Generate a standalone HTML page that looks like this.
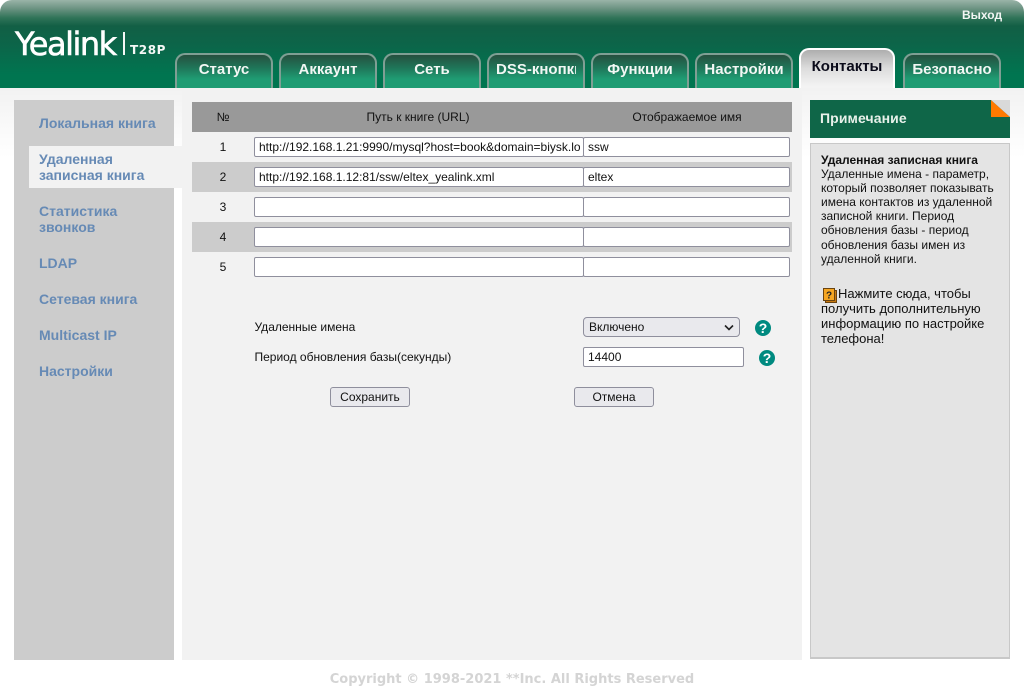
<!DOCTYPE html>
<html><head><meta charset="utf-8"><style>
*{box-sizing:border-box}
html,body{margin:0;padding:0}
body{width:1024px;height:697px;position:relative;overflow:hidden;background:#fff;font-family:"Liberation Sans",sans-serif;font-size:12px;color:#111}
.a{position:absolute}
#hd{left:0;top:0;width:1024px;height:88px;border-radius:12px 12px 0 0;background:linear-gradient(#9ab4a8 0,#6f9585 8px,#2f7358 18px,#125f45 26px,#0c6549 45px,#007550 75px,#007550 88px)}
#bg{left:0;top:88px;width:1024px;height:70px;background:linear-gradient(#f2f2f2,#fff)}
.tab{position:absolute;top:53px;width:98px;height:35px;border:2px solid #7f9f94;border-bottom:0;border-radius:10px 10px 0 0;background:linear-gradient(#26503f 0,#1f7659 13px,#1f9c73 24px,#1f9c73 100%);color:#f2f7f4;font:bold 15px/30px "Liberation Sans",sans-serif;text-align:center;overflow:hidden;white-space:nowrap}
.tab.on{top:48px;width:96px;height:40px;border:2px solid #fff;border-bottom:0;background:linear-gradient(#aeaeae 0,#dcdcdc 18px,#f3f3f3 36px);color:#0b0b1a;line-height:33px}
#side{left:14px;top:100px;width:160px;height:560px;background:#ccc}
#main{left:182px;top:88px;width:620px;height:572px;background:#f2f2f2}
.m{position:absolute;left:39px;font:bold 14px/16px "Liberation Sans",sans-serif;color:#668ab5}
#act{left:29px;top:146px;width:153px;height:42px;background:#f2f2f2}
.row{position:absolute;left:192px;width:600px;height:30px}
.n{position:absolute;left:192px;width:62px;text-align:center;line-height:30px;height:30px}
.i{position:absolute;height:20px;background:#fff;border:1px solid #8f8f9d;border-radius:2px;padding:0 3px 0 4px;line-height:18px;overflow:hidden;white-space:nowrap;color:#111}
.i .c{display:block;overflow:hidden}
.b{position:absolute;top:387px;width:80px;height:20px;background:#e9e9ed;border:1px solid #8f8f9d;border-radius:3px;text-align:center;line-height:18px}
.h{position:absolute;width:16px;height:16px;border-radius:50%;background:#008a80;color:#fff;font:bold 14px/16px "Liberation Sans",sans-serif;text-align:center}
</style></head><body>
<div class="a" id="bg"></div>
<div class="a" id="hd"></div>
<div class="a" style="left:15px;top:25px;font:32px/38px 'DejaVu Sans',sans-serif;color:#fff;letter-spacing:-1.5px;-webkit-text-stroke:.6px #fff;white-space:nowrap">Yealink</div>
<div class="a" style="left:123px;top:32px;width:2px;height:23px;background:#f4f8f6"></div>
<div class="a" style="left:130px;top:43px;font:bold 12px/15px 'DejaVu Sans',sans-serif;color:#f4f8f6;letter-spacing:.6px;white-space:nowrap">T28P</div>
<div class="a" style="left:962px;top:8px;font:bold 12px/14px 'Liberation Sans',sans-serif;color:#f2f5f3">Выход</div>
<div class="tab" style="left:175px">Статус</div>
<div class="tab" style="left:279px">Аккаунт</div>
<div class="tab" style="left:383px">Сеть</div>
<div class="tab" style="left:487px;padding-left:7px;text-align:left"><div style="width:80px;overflow:hidden">DSS-кнопки</div></div>
<div class="tab" style="left:591px">Функции</div>
<div class="tab" style="left:695px">Настройки</div>
<div class="tab on" style="left:799px">Контакты</div>
<div class="tab" style="left:903px">Безопасно</div>

<div class="a" id="side"></div>
<div class="a" id="main"></div>
<div class="a" id="act"></div>
<div class="m" style="top:115px">Локальная книга</div>
<div class="m" style="top:151px">Удаленная<br>записная книга</div>
<div class="m" style="top:203px">Статистика<br>звонков</div>
<div class="m" style="top:255px">LDAP</div>
<div class="m" style="top:291px">Сетевая книга</div>
<div class="m" style="top:327px">Multicast IP</div>
<div class="m" style="top:363px">Настройки</div>

<div class="row" style="top:102px;background:#999"></div>
<div class="n" style="top:102px;left:192px">№</div>
<div class="a" style="left:254px;width:328px;top:102px;line-height:30px;text-align:center">Путь к книге (URL)</div>
<div class="a" style="left:584px;width:206px;top:102px;line-height:30px;text-align:center">Отображаемое имя</div>
<div class="row" style="top:162px;background:#ccc"></div>
<div class="row" style="top:222px;background:#ccc"></div>
<div class="n" style="top:132px">1</div>
<div class="n" style="top:162px">2</div>
<div class="n" style="top:192px">3</div>
<div class="n" style="top:222px">4</div>
<div class="n" style="top:252px">5</div>
<div class="i" style="left:254px;top:137px;width:330px"><span class="c">http://192.168.1.21:9990/mysql?host=book&amp;domain=biysk.local</span></div>
<div class="i" style="left:583px;top:137px;width:207px">ssw</div>
<div class="i" style="left:254px;top:167px;width:330px">http://192.168.1.12:81/ssw/eltex_yealink.xml</div>
<div class="i" style="left:583px;top:167px;width:207px">eltex</div>
<div class="i" style="left:254px;top:197px;width:330px"></div>
<div class="i" style="left:583px;top:197px;width:207px"></div>
<div class="i" style="left:254px;top:227px;width:330px"></div>
<div class="i" style="left:583px;top:227px;width:207px"></div>
<div class="i" style="left:254px;top:257px;width:330px"></div>
<div class="i" style="left:583px;top:257px;width:207px"></div>

<div class="a" style="left:254.5px;top:320px;line-height:14px">Удаленные имена</div>
<div class="a" style="left:254.5px;top:350px;line-height:14px">Период обновления базы(секунды)</div>
<div class="i" style="left:583px;top:317px;width:157px;background:#e9e9ed;border-radius:4px;padding-left:5px">Включено
<svg class="a" style="left:140px;top:6px" width="10" height="7" viewBox="0 0 10 7"><path d="M1 1.5 5 5.5 9 1.5" fill="none" stroke="#222" stroke-width="1.6"/></svg></div>
<div class="i" style="left:583px;top:347px;width:161px">14400</div>
<div class="h" style="left:755px;top:320px">?</div>
<div class="h" style="left:759px;top:350px">?</div>
<div class="b" style="left:330px">Сохранить</div>
<div class="b" style="left:574px">Отмена</div>

<div class="a" style="left:810px;top:100px;width:200px;height:38px;background:#0f6648;color:#e8f1ea;font:bold 14px/36px 'Liberation Sans',sans-serif;padding-left:10px;letter-spacing:.1px">Примечание</div>
<svg class="a" style="left:991px;top:100px" width="19" height="17" viewBox="0 0 19 17"><path d="M0 0 19 17H0Z" fill="#ff7a00"/><path d="M0 0H19V17Z" fill="#d9d9d9"/></svg>
<div class="a" style="left:810px;top:143px;width:200px;height:516px;background:#e4e4e4;border:1px solid #c8c8c8;border-width:1px 1px 2px 1px"></div>
<div class="a" style="left:821px;top:153px;width:180px;line-height:14.1px;color:#111"><b>Удаленная записная книга</b><br>Удаленные имена - параметр,<br>который позволяет показывать<br>имена контактов из удаленной<br>записной книги. Период<br>обновления базы - период<br>обновления базы имен из<br>удаленной книги.</div>
<svg class="a" style="left:823px;top:288px" width="14" height="15" viewBox="0 0 14 15"><rect x="2.5" y="2.5" width="11" height="12" fill="#c97a10" stroke="#6b4410"/><rect x=".5" y=".5" width="11" height="12" fill="#f5a623" stroke="#6b4410"/><text x="6" y="10.5" font-family="Liberation Sans" font-weight="bold" font-size="10" text-anchor="middle" fill="#222">?</text></svg>
<div class="a" style="left:821px;top:286px;width:190px;line-height:15px;font-size:13px;color:#111;text-indent:17px;white-space:nowrap">Нажмите сюда, чтобы<br><span style="display:block;text-indent:0">получить дополнительную<br>информацию по настройке<br>телефона!</span></div>

<div class="a" style="left:0;top:672px;width:1024px;text-align:center;font:bold 13px/16px 'DejaVu Sans',sans-serif;color:#d4d4d4">Copyright © 1998-2021 **Inc. All Rights Reserved</div>
</body></html>
